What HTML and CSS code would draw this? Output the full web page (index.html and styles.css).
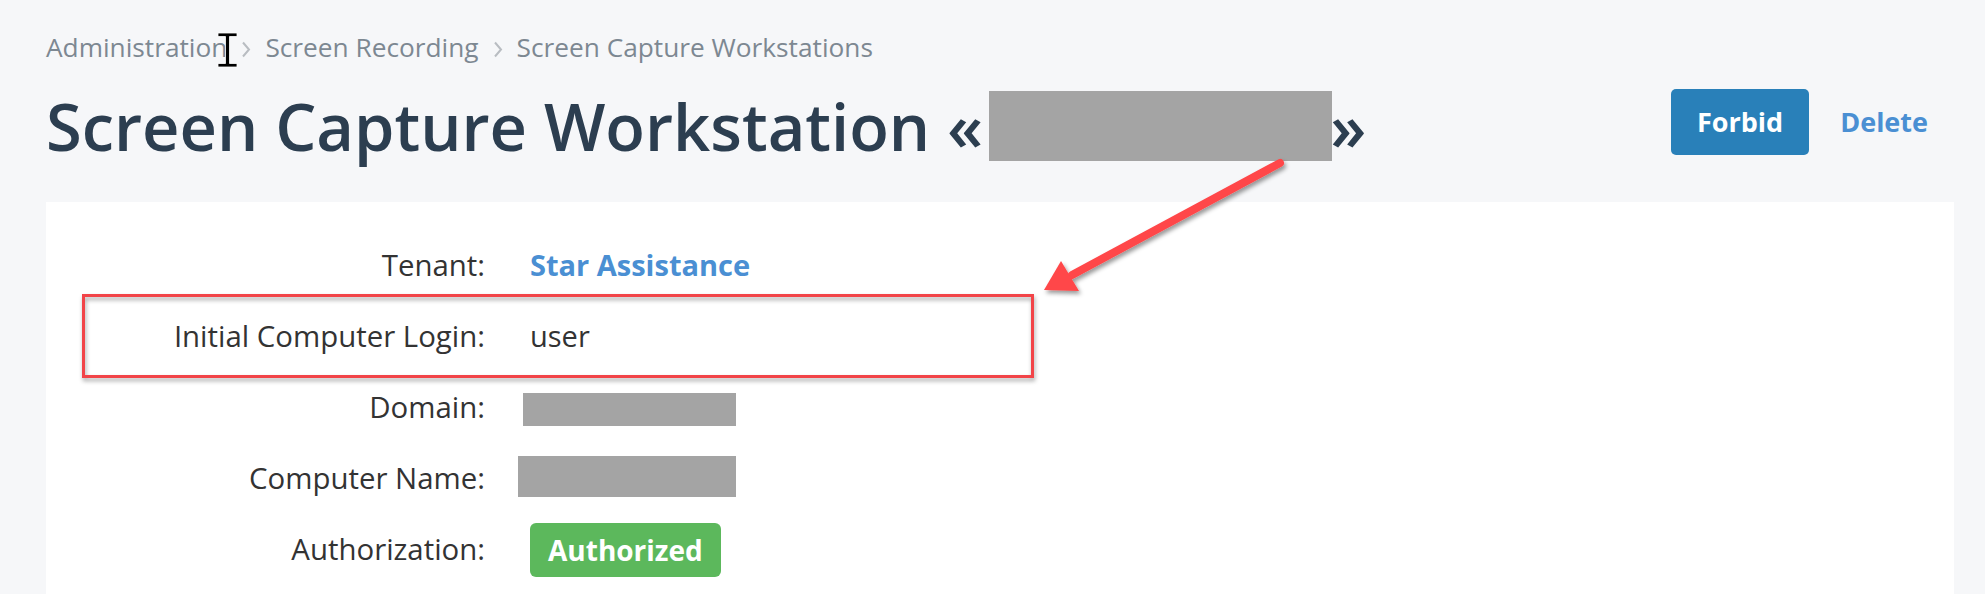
FILE: index.html
```html
<!DOCTYPE html>
<html lang="en">
<head>
  <meta charset="UTF-8">
  <title>Screen Capture Workstation</title>
  <link rel="stylesheet" href="styles.css">
</head>
<body>
  <div class="page">
    <nav class="breadcrumb">
      <a href="#">Administration</a>
      <svg class="sep" viewBox="0 0 10 18"><path d="M2 2 L8 9 L2 16"/></svg>
      <a href="#">Screen Recording</a>
      <svg class="sep" viewBox="0 0 10 18"><path d="M2 2 L8 9 L2 16"/></svg>
      <a href="#">Screen Capture Workstations</a>
      <!-- mouse cursor captured in the screenshot -->
      <svg class="cursor" viewBox="0 0 24 38">
        <path d="M2 2 H21 V5.5 H13.5 V32.5 H21 V36 H2 V32.5 H9.5 V5.5 H2 Z"/>
      </svg>
    </nav>

    <div class="title-row">
      <h1>Screen Capture Workstation «<span class="redacted redacted-title"></span>»</h1>
      <div class="actions">
        <button class="btn btn-primary">Forbid</button>
        <button class="btn btn-link">Delete</button>
      </div>
    </div>

    <div class="card">
      <div class="field">
        <span class="label">Tenant:</span>
        <span class="value"><a href="#" class="link">Star Assistance</a></span>
      </div>
      <div class="field">
        <span class="label">Initial Computer Login:</span>
        <span class="value">user</span>
      </div>
      <div class="field">
        <span class="label">Domain:</span>
        <span class="value"><span class="redacted redacted-domain"></span></span>
      </div>
      <div class="field">
        <span class="label">Computer Name:</span>
        <span class="value"><span class="redacted redacted-name"></span></span>
      </div>
      <div class="field">
        <span class="label">Authorization:</span>
        <span class="value"><span class="badge badge-success">Authorized</span></span>
      </div>

      <!-- annotation box -->
      <div class="highlight"></div>
    </div>

    <!-- annotation arrow -->
    <svg class="arrow" viewBox="0 0 270 160">
      <defs>
        <filter id="shadow" x="-20%" y="-20%" width="140%" height="140%">
          <feDropShadow dx="2" dy="3" stdDeviation="2" flood-color="#000" flood-opacity="0.4"/>
        </filter>
      </defs>
      <g filter="url(#shadow)">
        <line x1="250" y1="13" x2="42" y2="125"/>
        <polygon points="14,140 31,111 49,141"/>
      </g>
    </svg>
  </div>
</body>
</html>
```

FILE: styles.css
```css
* {
  box-sizing: border-box;
  margin: 0;
  padding: 0;
}
body {
  background: #f6f7f9;
  font-family: 'Open Sans', 'Noto Sans', sans-serif;
  color: #333;
  overflow: hidden;
}
.page {
  position: relative;
  padding: 30px 31px 0 46px;
}

/* Breadcrumb */
.breadcrumb {
  display: flex;
  align-items: center;
  gap: 14px;
  font-size: 26.25px;
  line-height: 35.75px;
}
.breadcrumb a {
  color: #7d8892;
  text-decoration: none;
}
.breadcrumb .sep {
  width: 10px;
  height: 19px;
  margin-top: 3px;
}
.breadcrumb .sep path {
  fill: none;
  stroke: #b9bdc2;
  stroke-width: 2;
}
.cursor {
  position: absolute;
  left: 216px;
  top: 31px;
  width: 24px;
  height: 38px;
}
.cursor path {
  fill: #000;
  stroke: #fff;
  stroke-width: 0.8;
}

/* Title */
.title-row {
  display: flex;
  justify-content: space-between;
  align-items: center;
  margin-top: 23px;
}
h1 {
  font-size: 65px;
  line-height: 73px;
  font-weight: 600;
  color: #2c3e50;
  white-space: nowrap;
}
.actions {
  display: flex;
  gap: 5px;
  margin-bottom: 10px;
}
.btn {
  font-family: inherit;
  font-size: 27px;
  font-weight: 700;
  line-height: 38px;
  padding: 14px 26px;
  border: none;
  border-radius: 5px;
  cursor: pointer;
}
.btn-primary {
  background: #2980b9;
  color: #fff;
}
.btn-link {
  background: transparent;
  color: #4a8fd3;
}

.redacted {
  display: inline-block;
  background: #a4a4a4;
}
.redacted-title {
  width: 343px;
  height: 70px;
  vertical-align: -10px;
  margin: 0 -2px 0 6px;
}

/* Details card */
.card {
  position: relative;
  background: #fff;
  margin-top: 37px;
  padding: 28px 0;
  min-height: 420px;
}
.field {
  display: grid;
  grid-template-columns: 439px 1fr;
  column-gap: 45px;
  align-items: center;
  min-height: 71px;
  font-size: 29px;
  line-height: 38px;
}
.field .label {
  text-align: right;
  font-size: 29.4px;
  color: #333;
}
.field .value {
  display: flex;
  align-items: center;
  color: #333;
}
.link {
  color: #4a8fd3;
  font-weight: 700;
  text-decoration: none;
}
.redacted-domain {
  width: 213px;
  height: 33px;
  margin-left: -7px;
  margin-top: 4px;
}
.redacted-name {
  width: 218px;
  height: 41px;
  margin-left: -12px;
  margin-top: -4px;
}
.badge {
  display: inline-block;
  font-size: 28px;
  font-weight: 700;
  padding: 8px 18px;
  border-radius: 6px;
  margin-top: 2px;
}
.badge-success {
  background: #5cb85c;
  color: #fff;
}

/* Annotations */
.highlight {
  position: absolute;
  left: 36px;
  top: 92px;
  width: 952px;
  height: 84px;
  border: 3px solid #f24448;
  filter: drop-shadow(1px 3px 2px rgba(0, 0, 0, 0.35));
}
.arrow {
  position: absolute;
  left: 1030px;
  top: 150px;
  width: 270px;
  height: 160px;
  overflow: visible;
}
.arrow line {
  stroke: #ff4648;
  stroke-width: 8;
  stroke-linecap: round;
}
.arrow polygon {
  fill: #ff4648;
}
```
